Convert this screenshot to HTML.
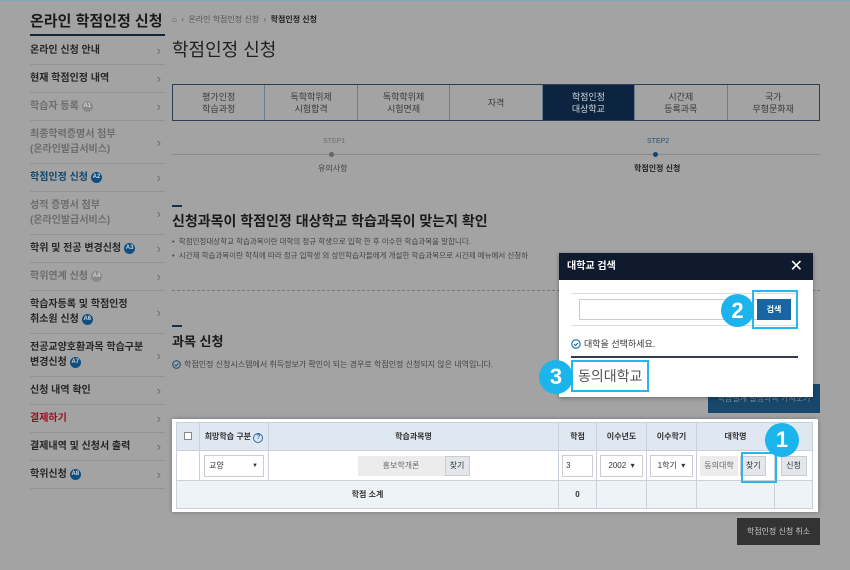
<!DOCTYPE html>
<html><head><meta charset="utf-8"><style>
*{margin:0;padding:0;box-sizing:border-box}
body{width:850px;height:570px;overflow:hidden;background:#a3a3a3;font-family:"Liberation Sans","Noto Sans CJK KR",sans-serif;position:relative;color:#1f1f1f}
.a{position:absolute;white-space:nowrap}
.sb .it{position:absolute;left:30px;width:135px;border-bottom:1px solid #939393;font-size:10px;font-weight:bold;color:#262626;display:flex;align-items:center;line-height:15px}
.sb .it.g{color:#6c6c6c}
.sb .it:after{content:"›";position:absolute;right:4px;color:#6c6c6c;font-weight:normal;font-size:13px}
.bd{display:inline-block;width:11px;height:11px;border-radius:50%;background:#0f4e80;color:#cfd8e0;font-size:6px;text-align:center;line-height:11px;margin-left:3px;vertical-align:middle}
.bd.g{background:#8a8a8a}
.tabs{position:absolute;left:172px;top:84px;width:648px;height:37px;border:1px solid #2b3f57;display:flex}
.tabs div{flex:1;border-left:1px solid #6d7a89;font-size:9px;color:#3a3a3a;text-align:center;display:flex;align-items:center;justify-content:center;line-height:12px}
.tabs div:first-child{border-left:none}
.tabs .on{background:#0d2440;color:#cfd6de}
table{border-collapse:collapse;position:absolute;left:176px;top:422px;width:637px;font-size:8px}
td{border:1px solid #c9d2dc;text-align:center;color:#333}
.ck{display:inline-block;vertical-align:-2px;margin-right:3px}
</style></head><body>
<div class="a" style="left:0;top:0;width:850px;height:1px;background:#7fa6bf"></div>
<div class="sb">
<div class="a" style="left:30px;top:10px;font-size:15px;font-weight:bold;color:#1b1b1b">온라인 학점인정 신청</div>
<div class="a" style="left:30px;top:34px;width:135px;height:2px;background:#14243a"></div>
<div class="it" style="top:37px;height:28px">온라인 신청 안내</div>
<div class="it" style="top:65px;height:28px">현재 학점인정 내역</div>
<div class="it g" style="top:93px;height:28px">학습자 등록<span class="bd g">A1</span></div>
<div class="it g" style="top:121px;height:43px">최종학력증명서 첨부<br>(온라인발급서비스)</div>
<div class="it" style="top:164px;height:28px;color:#10466f">학점인정 신청<span class="bd">A2</span></div>
<div class="it g" style="top:192px;height:43px">성적 증명서 첨부<br>(온라인발급서비스)</div>
<div class="it" style="top:235px;height:28px">학위 및 전공 변경신청<span class="bd">A3</span></div>
<div class="it g" style="top:263px;height:28px">학위연계 신청<span class="bd g">A4</span></div>
<div class="it" style="top:291px;height:43px"><span>학습자등록 및 학점인정<br>취소원 신청<span class="bd">A6</span></span></div>
<div class="it" style="top:334px;height:43px"><span>전공교양호환과목 학습구분<br>변경신청<span class="bd">A7</span></span></div>
<div class="it" style="top:377px;height:28px">신청 내역 확인</div>
<div class="it" style="top:405px;height:28px;color:#9a1020">결제하기</div>
<div class="it" style="top:433px;height:28px">결제내역 및 신청서 출력</div>
<div class="it" style="top:461px;height:28px">학위신청<span class="bd">A8</span></div>
</div>

<div class="a" style="left:172px;top:14px;font-size:8px;color:#555">⌂ &nbsp;›&nbsp; 온라인 학점인정 신청 &nbsp;›&nbsp; <b style="color:#222">학점인정 신청</b></div>
<div class="a" style="left:172px;top:36px;font-size:18px;color:#1f1f1f">학점인정 신청</div>
<div class="tabs"><div>평가인정<br>학습과정</div><div>독학학위제<br>시험합격</div><div>독학학위제<br>시험면제</div><div>자격</div><div class="on">학점인정<br>대상학교</div><div>시간제<br>등록과목</div><div>국가<br>무형문화재</div></div>

<div class="a" style="left:172px;top:154px;width:648px;height:1px;background:#8a8a8a"></div>
<div class="a" style="left:323px;top:138px;font-size:7px;color:#6c6c6c">STEP1</div>
<div class="a" style="left:329px;top:152px;width:5px;height:5px;border-radius:50%;background:#666"></div>
<div class="a" style="left:318px;top:163px;font-size:8px;color:#444">유의사항</div>
<div class="a" style="left:647px;top:138px;font-size:7px;color:#1f4f78">STEP2</div>
<div class="a" style="left:653px;top:152px;width:5px;height:5px;border-radius:50%;background:#10466f"></div>
<div class="a" style="left:634px;top:163px;font-size:8px;font-weight:bold;color:#222">학점인정 신청</div>

<div class="a" style="left:172px;top:205px;width:10px;height:2px;background:#14324f"></div>
<div class="a" style="left:172px;top:211px;font-size:14px;font-weight:bold;color:#1a1a1a">신청과목이 학점인정 대상학교 학습과목이 맞는지 확인</div>
<div class="a" style="left:172px;top:236px;font-size:7.5px;color:#444">•&nbsp; 학점인정대상학교 학습과목이란 대학의 정규 학생으로 입학 한 후 이수한 학습과목을 말합니다.</div>
<div class="a" style="left:172px;top:250px;font-size:7.5px;color:#444">•&nbsp; 시간제 학습과목이란 학칙에 따라 정규 입학생 외 성인학습자들에게 개설한 학습과목으로 시간제 메뉴에서 신청하</div>
<div class="a" style="left:172px;top:290px;width:648px;border-top:1px dashed #6d7a89"></div>
<div class="a" style="left:172px;top:325px;width:10px;height:2px;background:#14324f"></div>
<div class="a" style="left:172px;top:331px;font-size:13px;font-weight:bold;color:#1a1a1a">과목 신청</div>
<div class="a" style="left:172px;top:359px;font-size:8px;color:#444"><svg class="ck" width="9" height="9" viewBox="0 0 10 10"><circle cx="5" cy="5" r="4.2" fill="none" stroke="#10466f" stroke-width="1.1"/><path d="M3 5.2l1.5 1.4 2.6-2.8" fill="none" stroke="#10466f" stroke-width="1.1"/></svg>학점인정 신청시스템에서 취득정보가 확인이 되는 경우로 학점인정 신청되지 않은 내역입니다.</div>
<div class="a" style="left:708px;top:384px;width:112px;height:29px;background:#17476b;color:#7d92a5;font-size:8px;text-align:center;line-height:29px">학습설계 설명과목 가져오기</div>

<div class="a" style="left:172px;top:419px;width:646px;height:93px;background:#fff;box-shadow:0 0 4px rgba(0,0,0,.3)"></div>
<div class="a" style="left:176px;top:422px;width:637px;height:87px;border:2px solid #1b3a60"></div>
<table>
<tr style="height:28px;background:#dfe7f0;font-weight:bold"><td style="width:23px"><span style="display:inline-block;width:8px;height:8px;border:1px solid #888;background:#fff"></span></td><td style="width:69px">희망학습 구분 <span style="display:inline-block;width:10px;height:10px;border:1px solid #2a6aa5;border-radius:50%;color:#2a6aa5;font-size:7px;line-height:8px">?</span></td><td style="width:290px">학습과목명</td><td style="width:38px">학점</td><td style="width:50px">이수년도</td><td style="width:50px">이수학기</td><td style="width:78px">대학명</td><td></td></tr>
<tr style="height:30px;background:#fff"><td></td><td><div style="margin:0 4px;border:1px solid #ccc;height:22px;line-height:20px;text-align:left;padding-left:4px">교양 <span style="float:right;margin-right:5px;font-size:6px">▼</span></div></td>
<td><span style="display:inline-block;background:#ececec;width:87px;height:20px;line-height:20px;color:#666">홍보학개론</span><span style="display:inline-block;background:#e3e7ec;border:1px solid #ccc;width:25px;height:20px;line-height:18px">찾기</span></td>
<td><div style="margin:0 3px;border:1px solid #ccc;height:22px;line-height:20px;text-align:left;padding-left:3px">3</div></td>
<td><div style="margin:0 3px;border:1px solid #ccc;height:22px;line-height:20px">2002 &nbsp;▾</div></td>
<td><div style="margin:0 3px;border:1px solid #ccc;height:22px;line-height:20px">1학기 &nbsp;▾</div></td>
<td style="text-align:left;padding-left:3px"><span style="display:inline-block;background:#ececec;width:38px;height:20px;line-height:20px;color:#666;text-align:center">동의대학</span> <span style="display:inline-block;background:#e3e7ec;border:1px solid #ccc;width:26px;height:20px;line-height:18px;text-align:center">찾기</span></td>
<td><span style="display:inline-block;background:#e3e7ec;border:1px solid #ccc;width:26px;height:20px;line-height:18px">신청</span></td></tr>
<tr style="height:28px;background:#eef3f8;font-weight:bold"><td colspan="3">학점 소계</td><td>0</td><td></td><td></td><td></td><td></td></tr>
</table>
<div class="a" style="left:741px;top:452px;width:36px;height:31px;border:2px solid #29b6ea"></div>
<div class="a" style="left:765px;top:423px;width:34px;height:34px;border-radius:50%;background:#1bb4ec;color:#fff;font-size:22px;font-weight:bold;text-align:center;line-height:34px">1</div>

<div class="a" style="left:737px;top:518px;width:83px;height:27px;background:#333;color:#c8c8c8;font-size:8px;text-align:center;line-height:27px">학점인정 신청 취소</div>

<div class="a" style="left:559px;top:253px;width:254px;height:144px;background:#fff;box-shadow:0 1px 4px rgba(0,0,0,.35)"></div>
<div class="a" style="left:559px;top:253px;width:254px;height:27px;background:#0f1a2e;color:#fff;font-size:10px;font-weight:bold;line-height:27px;padding-left:8px">대학교 검색<span style="position:absolute;right:10px;font-size:16px;font-weight:normal">✕</span></div>
<div class="a" style="left:571px;top:293px;width:227px;height:33px;border-top:1px solid #ddd;border-bottom:1px solid #ddd"></div>
<div class="a" style="left:579px;top:299px;width:180px;height:21px;border:1px solid #ccc"></div>
<div class="a" style="left:757px;top:299px;width:34px;height:21px;background:#1766a3;color:#fff;font-size:8px;font-weight:bold;text-align:center;line-height:21px">검색</div>
<div class="a" style="left:752px;top:290px;width:46px;height:39px;border:2px solid #29b6ea"></div>
<div class="a" style="left:721px;top:294px;width:33px;height:33px;border-radius:50%;background:#1bb4ec;color:#fff;font-size:22px;font-weight:bold;text-align:center;line-height:33px">2</div>
<div class="a" style="left:571px;top:337px;font-size:9px;color:#333"><svg class="ck" width="10" height="10" viewBox="0 0 10 10"><circle cx="5" cy="5" r="4.2" fill="none" stroke="#1766a3" stroke-width="1.1"/><path d="M3 5.2l1.5 1.4 2.6-2.8" fill="none" stroke="#1766a3" stroke-width="1.1"/></svg>대학을 선택하세요.</div>
<div class="a" style="left:571px;top:356px;width:227px;height:2px;background:#333d4d"></div>
<div class="a" style="left:571px;top:360px;width:78px;height:32px;border:2px solid #29b6ea;font-size:14px;color:#555;line-height:28px;padding-left:5px">동의대학교</div>
<div class="a" style="left:539px;top:360px;width:34px;height:34px;border-radius:50%;background:#1bb4ec;color:#fff;font-size:22px;font-weight:bold;text-align:center;line-height:34px">3</div>
</body></html>
